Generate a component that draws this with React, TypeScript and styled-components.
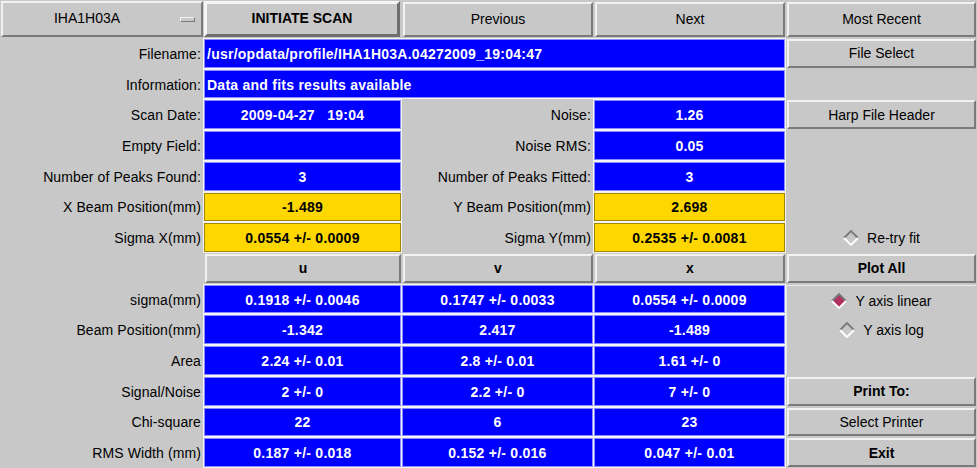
import React from 'react';
import styled, { createGlobalStyle, css } from 'styled-components';

const GlobalStyle = createGlobalStyle`
  html, body {
    margin: 0;
    padding: 0;
    background: #c8c8c8;
  }
`;

const Panel = styled.div`
  width: 977px;
  height: 468px;
  display: grid;
  grid-template-columns: 204px 198px 192px 192px 191px;
  grid-template-rows: 38px repeat(14, 1fr);
  background: #c8c8c8;
  font-family: 'Liberation Sans', Arial, Helvetica, sans-serif;
  font-size: 14px;
  color: #000;
  overflow: hidden;
`;

const Label = styled.div`
  display: flex;
  align-items: center;
  justify-content: flex-end;
  padding-right: 3px;
  padding-top: 1px;
  white-space: nowrap;
  letter-spacing: 0.1px;
`;

const Blank = styled.div<{ $rows?: number }>`
  grid-row: span ${p => p.$rows ?? 1};
`;

const Field = styled.div<{ $tone?: 'blue' | 'yellow'; $span?: number; $left?: boolean }>`
  grid-column: span ${p => p.$span ?? 1};
  margin: 1px 1px 1px 0;
  display: flex;
  align-items: center;
  justify-content: ${p => (p.$left ? 'flex-start' : 'center')};
  padding-left: ${p => (p.$left ? '2px' : '0')};
  padding-top: 1px;
  font-weight: bold;
  letter-spacing: 0.25px;
  white-space: pre;
  box-shadow: 0 0 0 1px #f4f4f4;
  ${p =>
    p.$tone === 'yellow'
      ? css`
          background: #ffd700;
          color: #000;
          border: 1px solid #a08600;
        `
      : css`
          background: #0000ff;
          color: #fff;
          border: 1px solid #8a8aff;
        `}
`;

const Button = styled.div<{ $bold?: boolean; $top?: boolean }>`
  margin: ${p => (p.$top ? '2px 1px 1px 1px' : '1px 1px 1px 1px')};
  padding-bottom: ${p => (p.$top ? '2px' : '0')};
  display: flex;
  align-items: center;
  justify-content: center;
  background: #c8c8c8;
  border-top: 2px solid #f2f2f2;
  border-left: 2px solid #f2f2f2;
  border-bottom: 2px solid #7a7a7a;
  border-right: 2px solid #7a7a7a;
  font-weight: ${p => (p.$bold ? 'bold' : 'normal')};
  white-space: nowrap;
`;

const DefaultButton = styled(Button)`
  margin: 1px 2px 1px 0;
  padding-bottom: 2px;
  border-top: 3px solid #f6f6f6;
  border-left: 3px solid #f6f6f6;
  border-bottom: 3px solid #6e6e6e;
  border-right: 3px solid #6e6e6e;
`;

const OptionMenu = styled(Button)`
  margin: 1px 1px 1px 1px;
  position: relative;
  padding-right: 30px;
`;

const OptionMark = styled.span`
  position: absolute;
  right: 6px;
  top: 14px;
  width: 13px;
  height: 3px;
  background: #c8c8c8;
  border-top: 1px solid #f2f2f2;
  border-left: 1px solid #f2f2f2;
  border-bottom: 1px solid #7a7a7a;
  border-right: 1px solid #7a7a7a;
`;

const RadioGroup = styled.div<{ $rows?: number }>`
  grid-row: span ${p => p.$rows ?? 1};
  display: grid;
  grid-auto-rows: 1fr;
  margin: 1px 1px 1px 0;
  border-top: 1px solid #e8e8e8;
  border-left: 1px solid #e8e8e8;
`;

const RadioItem = styled.div`
  display: flex;
  align-items: center;
  justify-content: center;
  gap: 8px;
  white-space: nowrap;
`;

const Diamond = ({ on }: { on?: boolean }) => (
  <svg width="16" height="16" viewBox="0 0 16 16">
    <polygon points="8,1 15,8 8,15 1,8" fill={on ? '#b03060' : '#c8c8c8'} />
    <polyline points="1,8 8,1 15,8" fill="none" stroke="#7a7a7a" strokeWidth="1.8" />
    <polyline points="15,8 8,15 1,8" fill="none" stroke="#ffffff" strokeWidth="1.8" />
  </svg>
);

const Radio = ({ text, on }: { text: string; on?: boolean }) => (
  <RadioItem>
    <Diamond on={on} />
    <span>{text}</span>
  </RadioItem>
);

const fitRows = [
  { label: 'sigma(mm)', values: ['0.1918 +/- 0.0046', '0.1747 +/- 0.0033', '0.0554 +/- 0.0009'] },
  { label: 'Beam Position(mm)', values: ['-1.342', '2.417', '-1.489'] },
  { label: 'Area', values: ['2.24 +/- 0.01', '2.8 +/- 0.01', '1.61 +/- 0'] },
  { label: 'Signal/Noise', values: ['2 +/- 0', '2.2 +/- 0', '7 +/- 0'] },
  { label: 'Chi-square', values: ['22', '6', '23'] },
  { label: 'RMS Width (mm)', values: ['0.187 +/- 0.018', '0.152 +/- 0.016', '0.047 +/- 0.01'] },
];

const rightSide: Record<number, React.ReactNode> = {
  3: <Button $bold>Print To:</Button>,
  4: <Button>Select Printer</Button>,
  5: <Button $bold>Exit</Button>,
};

export default function App() {
  return (
    <>
      <GlobalStyle />
      <Panel>
        <OptionMenu $top>
          IHA1H03A
          <OptionMark />
        </OptionMenu>
        <DefaultButton $bold>INITIATE SCAN</DefaultButton>
        <Button $top>Previous</Button>
        <Button $top>Next</Button>
        <Button $top>Most Recent</Button>

        <Label>Filename:</Label>
        <Field $span={3} $left>/usr/opdata/profile/IHA1H03A.04272009_19:04:47</Field>
        <Button>File Select</Button>

        <Label>Information:</Label>
        <Field $span={3} $left>Data and fits results available</Field>
        <Blank />

        <Label>Scan Date:</Label>
        <Field>{'2009-04-27   19:04'}</Field>
        <Label>Noise:</Label>
        <Field>1.26</Field>
        <Button>Harp File Header</Button>

        <Label>Empty Field:</Label>
        <Field />
        <Label>Noise RMS:</Label>
        <Field>0.05</Field>
        <Blank />

        <Label>Number of Peaks Found:</Label>
        <Field>3</Field>
        <Label>Number of Peaks Fitted:</Label>
        <Field>3</Field>
        <Blank />

        <Label>X Beam Position(mm)</Label>
        <Field $tone="yellow">-1.489</Field>
        <Label>Y Beam Position(mm)</Label>
        <Field $tone="yellow">2.698</Field>
        <Blank />

        <Label>Sigma X(mm)</Label>
        <Field $tone="yellow">0.0554 +/- 0.0009</Field>
        <Label>Sigma Y(mm)</Label>
        <Field $tone="yellow">0.2535 +/- 0.0081</Field>
        <Radio text="Re-try fit" />

        <Blank />
        <Button $bold>u</Button>
        <Button $bold>v</Button>
        <Button $bold>x</Button>
        <Button $bold>Plot All</Button>

        {fitRows.map((row, i) => (
          <React.Fragment key={row.label}>
            <Label>{row.label}</Label>
            {row.values.map((v, j) => (
              <Field key={j}>{v}</Field>
            ))}
            {i === 0 ? (
              <RadioGroup $rows={3}>
                <Radio text="Y axis linear" on />
                <Radio text="Y axis log" />
                <span />
              </RadioGroup>
            ) : (
              rightSide[i] ?? null
            )}
          </React.Fragment>
        ))}
      </Panel>
    </>
  );
}
